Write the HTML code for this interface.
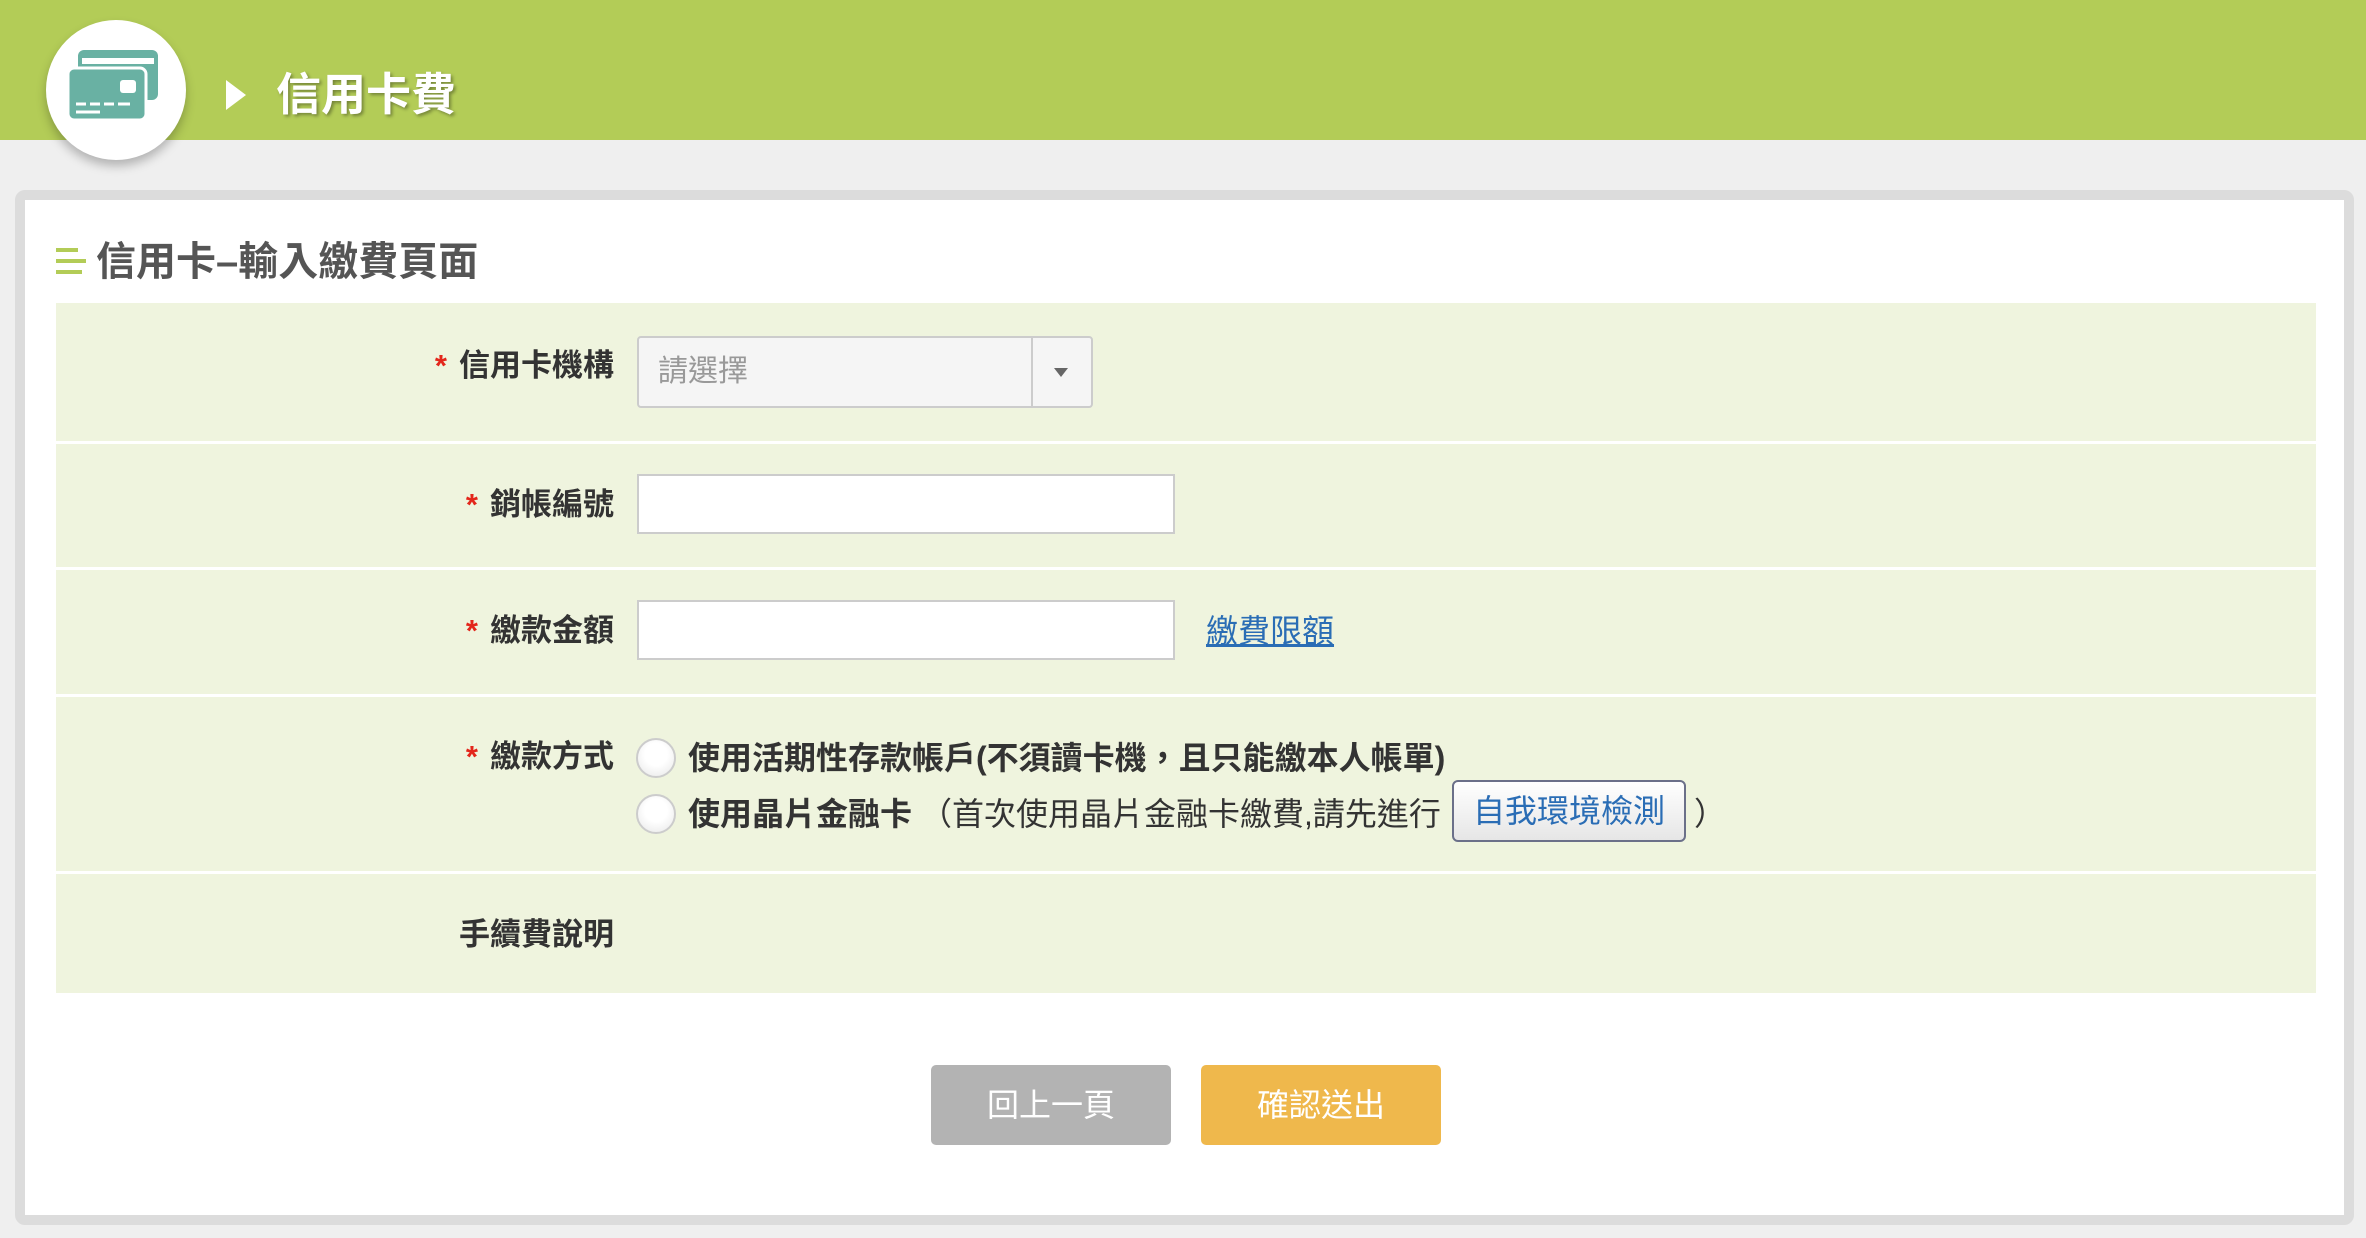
<!DOCTYPE html>
<html><head><meta charset="utf-8">
<style>
*{margin:0;padding:0;box-sizing:border-box}
body{width:2366px;height:1238px;background:#efefef;position:relative;overflow:hidden;font-family:"Liberation Sans","Noto Sans CJK TC",sans-serif;color:#333}
.abs{position:absolute}
.hdr{left:0;top:0;width:2366px;height:140px;background:#b3cc57}
.circle{left:46px;top:20px;width:140px;height:140px;border-radius:50%;background:#fff;box-shadow:0 6px 10px rgba(0,0,0,.25)}
.title{left:276px;top:68px;font-size:45px;font-weight:bold;color:#fff;text-shadow:2px 2px 3px rgba(0,0,0,.35);line-height:54px}
.panel{left:15px;top:190px;width:2339px;height:1035px;background:#fff;border:10px solid #dcdcdc;border-radius:10px}
.sh{left:96px;top:237px;font-size:40px;font-weight:bold;color:#555;line-height:50px}
.form{left:56px;top:303px;width:2260px;height:690px;background:#eff4de}
.sep{left:56px;width:2260px;height:3px;background:#fff}
.lbl{right:1752px;font-size:31px;font-weight:bold;line-height:40px;color:#333;white-space:nowrap}
.lbl b{color:#e3261b;margin-right:12px}
.inp{background:#fff;border:2px solid #ccc}
.radio{width:40px;height:40px;border-radius:50%;border:2px solid #ccc;background:radial-gradient(circle at 50% 40%,#fff 40%,#e6e6e6)}
.rt{font-size:32px;line-height:42px;white-space:nowrap;color:#333}
.btn{width:240px;height:80px;border-radius:5px;color:#fff;font-size:32px;text-align:center;line-height:80px}
</style></head><body>
<div class="abs hdr"></div>
<div class="abs circle"></div>
<svg class="abs" style="left:68px;top:48px" width="96" height="74" viewBox="0 0 96 74">
<rect x="10" y="2" width="80" height="50" rx="6" fill="#69b1a3"/>
<rect x="14" y="10" width="72" height="6" fill="#fff"/>
<rect x="0" y="20" width="78" height="52" rx="6" fill="#69b1a3" stroke="#fff" stroke-width="3"/>
<rect x="52" y="32" width="16" height="13" rx="3" fill="#fff"/>
<path d="M8 56h10M22 56h10M36 56h10M50 56h12M8 64h24" stroke="#fff" stroke-width="3"/>
</svg>
<svg class="abs" style="left:226px;top:80px" width="20" height="30"><path d="M0 0L20 15L0 30Z" fill="#fff"/></svg>
<div class="abs title">信用卡費</div>
<div class="abs panel"></div>
<svg class="abs" style="left:56px;top:248px" width="30" height="28"><rect x="0" y="0" width="22" height="4" fill="#b3cc57"/><rect x="0" y="11" width="30" height="4" fill="#b3cc57"/><rect x="0" y="22" width="26" height="4" fill="#b3cc57"/></svg>
<div class="abs sh">信用卡–輸入繳費頁面</div>
<div class="abs form"></div>
<div class="abs sep" style="top:441px"></div>
<div class="abs sep" style="top:567px"></div>
<div class="abs sep" style="top:694px"></div>
<div class="abs sep" style="top:871px"></div>

<div class="abs lbl" style="top:346px"><b>*</b>信用卡機構</div>
<div class="abs" style="left:637px;top:336px;width:456px;height:72px;background:#f5f5f5;border:2px solid #ccc;border-radius:4px"></div>
<div class="abs" style="left:1031px;top:338px;width:2px;height:68px;background:#ccc"></div>
<div class="abs" style="left:658px;top:352px;font-size:30px;line-height:40px;color:#999">請選擇</div>
<svg class="abs" style="left:1054px;top:368px" width="14" height="9"><path d="M0 0H14L7 9Z" fill="#666"/></svg>

<div class="abs lbl" style="top:485px"><b>*</b>銷帳編號</div>
<div class="abs inp" style="left:637px;top:474px;width:538px;height:60px"></div>

<div class="abs lbl" style="top:611px"><b>*</b>繳款金額</div>
<div class="abs inp" style="left:637px;top:600px;width:538px;height:60px"></div>
<div class="abs" style="left:1206px;top:611px;font-size:32px;line-height:40px;color:#2a6db5;text-decoration:underline">繳費限額</div>

<div class="abs lbl" style="top:737px"><b>*</b>繳款方式</div>
<div class="abs radio" style="left:636px;top:738px"></div>
<div class="abs rt" style="left:688px;top:737px;font-weight:bold">使用活期性存款帳戶(不須讀卡機，且只能繳本人帳單)</div>
<div class="abs radio" style="left:636px;top:794px"></div>
<div class="abs rt" style="left:688px;top:793px"><b>使用晶片金融卡</b><span style="margin-left:8px">（首次使用晶片金融卡繳費,請先進行</span></div>
<div class="abs" style="left:1452px;top:780px;width:234px;height:62px;border:2px solid #6b7089;border-radius:6px;background:linear-gradient(#fff,#e6e6e6);color:#2a6db5;font-size:32px;line-height:58px;text-align:center">自我環境檢測</div>
<div class="abs rt" style="left:1694px;top:793px">）</div>

<div class="abs lbl" style="top:915px">手續費說明</div>

<div class="abs btn" style="left:931px;top:1065px;background:#b3b3b3">回上一頁</div>
<div class="abs btn" style="left:1201px;top:1065px;background:#efb84c">確認送出</div>
</body></html>
